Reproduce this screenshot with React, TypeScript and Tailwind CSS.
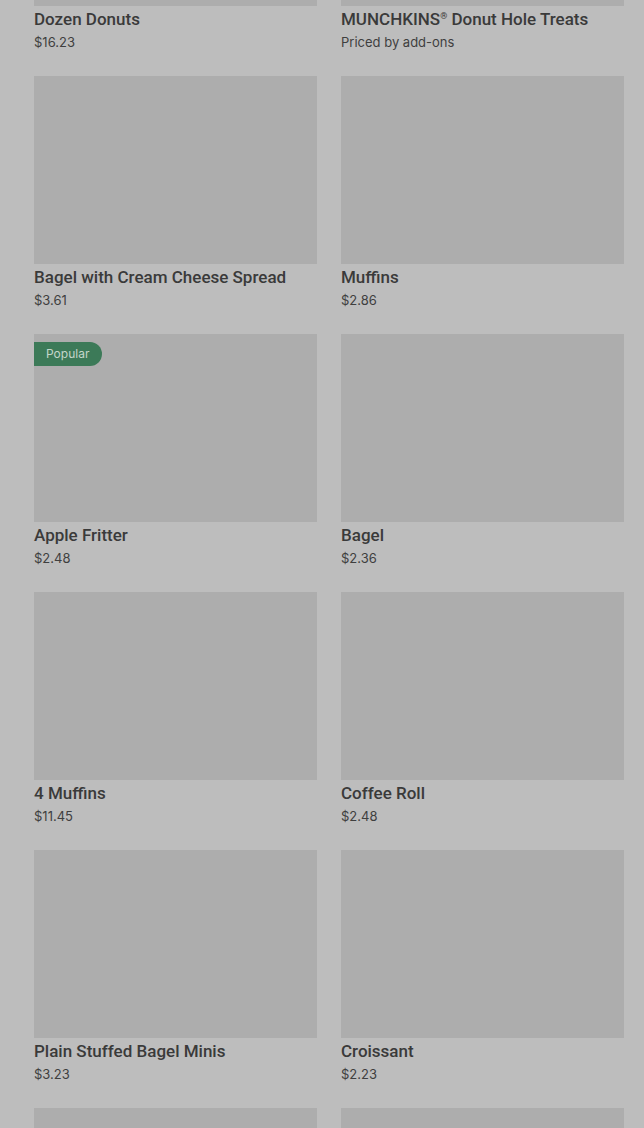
const items = [
  { name: "Dozen Donuts", price: "$16.23" },
  { name: "MUNCHKINS", reg: true, rest: " Donut Hole Treats", price: "Priced by add-ons" },
  { name: "Bagel with Cream Cheese Spread", price: "$3.61" },
  { name: "Muffins", price: "$2.86" },
  { name: "Apple Fritter", price: "$2.48", popular: true },
  { name: "Bagel", price: "$2.36" },
  { name: "4 Muffins", price: "$11.45" },
  { name: "Coffee Roll", price: "$2.48" },
  { name: "Plain Stuffed Bagel Minis", price: "$3.23" },
  { name: "Croissant", price: "$2.23" },
  { name: "", price: "" },
  { name: "", price: "" },
];

export default function App() {
  return (
    <div
      className="h-[1128px] overflow-hidden bg-[#bdbdbd] pl-[34px] pr-[20px] text-[#3a3a3a]"
      style={{ fontFamily: "Roboto, 'Liberation Sans', sans-serif" }}
    >
      <div className="-mt-[182px] grid grid-cols-2 gap-x-[24px] gap-y-[24px]">
        {items.map((item, i) => (
          <div key={i} className="flex flex-col">
            <div className="relative h-[188px] bg-[#adadad]">
              {item.popular && (
                <span className="absolute left-0 top-[8px] flex h-[24px] w-[68px] items-center rounded-r-full bg-[#3c7a58] pl-[12px] text-[12px] text-[#c4d6ca] [font-family:Inter,sans-serif]">
                  Popular
                </span>
              )}
            </div>
            <div className="mt-[3px] text-[17px] font-medium leading-[20px]">
              {item.name}
              {item.reg && <sup className="relative -top-[6px] text-[9px]">®</sup>}
              {item.rest}
            </div>
            <div className="mt-[3px] text-[13px] leading-[20px] text-[#3f3f3f] [font-family:Inter,sans-serif]">
              {item.price}
            </div>
          </div>
        ))}
      </div>
    </div>
  );
}
